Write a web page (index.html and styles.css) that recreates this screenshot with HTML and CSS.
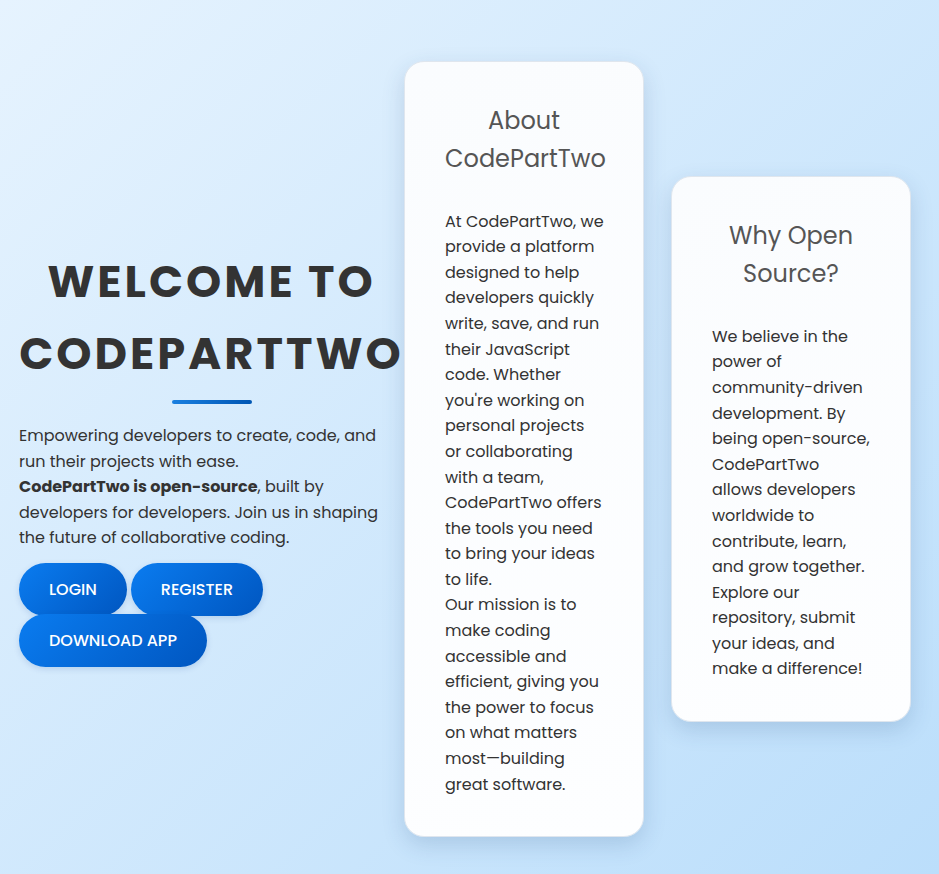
FILE: index.html
```html
<!DOCTYPE html>
<html lang="en">
<head>
<meta charset="utf-8">
<title>CodePartTwo</title>
<link rel="stylesheet" href="styles.css">
</head>
<body>
<div class="page">
  <section class="hero">
    <h1 class="hero-title">WELCOME TO<br>CODEPARTTWO</h1>
    <div class="hero-bar"></div>
    <p class="hero-text">Empowering developers to create, code, and<br>run their projects with ease.<br><strong>CodePartTwo is open-source</strong>, built by<br>developers for developers. Join us in shaping<br>the future of collaborative coding.</p>
    <div class="buttons"><a class="btn" href="#">LOGIN</a> <a class="btn" href="#">REGISTER</a> <a class="btn" href="#">DOWNLOAD APP</a></div>
  </section>
  <section class="card">
    <h2 class="card-title">About<br>CodePartTwo</h2>
    <p class="card-text">At CodePartTwo, we<br>provide a platform<br>designed to help<br>developers quickly<br>write, save, and run<br>their JavaScript<br>code. Whether<br>you're working on<br>personal projects<br>or collaborating<br>with a team,<br>CodePartTwo offers<br>the tools you need<br>to bring your ideas<br>to life.</p>
    <p class="card-text">Our mission is to<br>make coding<br>accessible and<br>efficient, giving you<br>the power to focus<br>on what matters<br>most—building<br>great software.</p>
  </section>
  <section class="card">
    <h2 class="card-title">Why Open<br>Source?</h2>
    <p class="card-text">We believe in the<br>power of<br>community-driven<br>development. By<br>being open-source,<br>CodePartTwo<br>allows developers<br>worldwide to<br>contribute, learn,<br>and grow together.<br>Explore our<br>repository, submit<br>your ideas, and<br>make a difference!</p>
  </section>
</div>
</body>
</html>
```

FILE: styles.css
```css
html, body {
  margin: 0;
  padding: 0;
}
body {
  font-family: "Poppins", "Open Sans", "DejaVu Sans", sans-serif;
  line-height: 1.6;
  color: #333;
  background: linear-gradient(135deg, #e6f3fe 0%, #bbdefb 100%);
  min-height: 874px;
  overflow: hidden;
}
.page {
  display: flex;
  align-items: center;
  height: 874px;
  padding: 24px 0 0 19px;
  box-sizing: border-box;
}
.hero {
  width: 385px;
  flex: none;
  margin-top: 13px;
  margin-right: 0;
}
.hero-title {
  margin: 0;
  font-size: 44.8px;
  line-height: 72px;
  font-weight: 700;
  letter-spacing: 3px;
  text-align: center;
  color: #333;
  white-space: nowrap;
}
.hero-bar {
  width: 80px;
  height: 4px;
  border-radius: 2px;
  margin: 10px auto 19px;
  background: linear-gradient(90deg, #1a7fe0, #0056b3);
}
.hero-text {
  margin: 0 0 12px;
  font-size: 16px;
  line-height: 25.6px;
  white-space: nowrap;
}
.hero-text strong {
  font-weight: 700;
}
.buttons {
  font-size: 0;
}
.btn {
  display: inline-block;
  font-size: 16px;
  line-height: 25px;
  font-weight: 500;
  color: #fff;
  text-decoration: none;
  padding: 14px 30px;
  border-radius: 30px;
  margin: 0 4px -2px 0;
  background: linear-gradient(135deg, #0a7cf0, #0056c0);
  box-shadow: 0 2px 6px rgba(0, 60, 140, 0.15);
}
.card {
  flex: none;
  width: 240px;
  box-sizing: border-box;
  padding: 40px 40px 39px;
  margin-right: 27px;
  border-radius: 20px;
  background: linear-gradient(160deg, #fafcfe, #fdfeff);
  border: 1px solid #dfe6ee;
  box-shadow: 0 8px 22px rgba(40, 80, 130, 0.18);
}
.card-title {
  margin: 0 0 30px;
  font-size: 24px;
  line-height: 38.4px;
  font-weight: 400;
  color: #555;
  text-align: center;
  white-space: nowrap;
}
.card-text {
  margin: 0;
  font-size: 16px;
  line-height: 25.6px;
  color: #333;
  white-space: nowrap;
}
```
